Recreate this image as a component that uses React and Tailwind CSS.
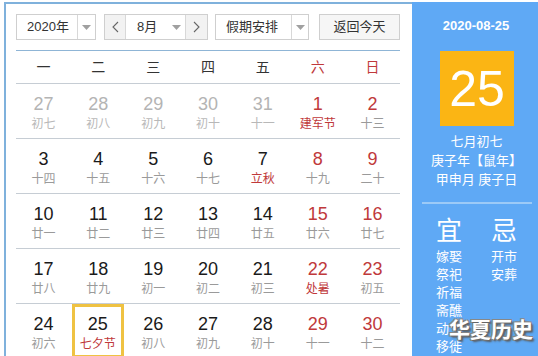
import React from "react";

const FONT = { fontFamily: '"Liberation Sans", "Noto Sans CJK SC", sans-serif' };

const rows = [
  [
    { n: "27", l: "初七", dim: true },
    { n: "28", l: "初八", dim: true },
    { n: "29", l: "初九", dim: true },
    { n: "30", l: "初十", dim: true },
    { n: "31", l: "十一", dim: true },
    { n: "1", l: "建军节", red: true, fest: true },
    { n: "2", l: "十三", red: true },
  ],
  [
    { n: "3", l: "十四" },
    { n: "4", l: "十五" },
    { n: "5", l: "十六" },
    { n: "6", l: "十七" },
    { n: "7", l: "立秋", fest: true },
    { n: "8", l: "十九", red: true },
    { n: "9", l: "二十", red: true },
  ],
  [
    { n: "10", l: "廿一" },
    { n: "11", l: "廿二" },
    { n: "12", l: "廿三" },
    { n: "13", l: "廿四" },
    { n: "14", l: "廿五" },
    { n: "15", l: "廿六", red: true },
    { n: "16", l: "廿七", red: true },
  ],
  [
    { n: "17", l: "廿八" },
    { n: "18", l: "廿九" },
    { n: "19", l: "初一" },
    { n: "20", l: "初二" },
    { n: "21", l: "初三" },
    { n: "22", l: "处暑", red: true, fest: true },
    { n: "23", l: "初五", red: true },
  ],
  [
    { n: "24", l: "初六" },
    { n: "25", l: "七夕节", fest: true, sel: true },
    { n: "26", l: "初八" },
    { n: "27", l: "初九" },
    { n: "28", l: "初十" },
    { n: "29", l: "十一", red: true },
    { n: "30", l: "十二", red: true },
  ],
];

function Arrow() {
  return (
    <svg width="9" height="5" viewBox="0 0 9 5">
      <polygon points="0,0 9,0 4.5,5" fill="#a0a0a0" />
    </svg>
  );
}

function Chevron({ dir }) {
  return (
    <svg width="7" height="12" viewBox="0 0 7 12">
      <polyline
        points={dir === "left" ? "6,1 1,6 6,11" : "1,1 6,6 1,11"}
        fill="none"
        stroke="#666"
        strokeWidth="1.1"
      />
    </svg>
  );
}

function Cell({ d }) {
  const numColor = d.dim ? "text-[#b4b4b4]" : d.red ? "text-[#c0393b]" : "text-[#1a1a1a]";
  const lunColor = d.fest ? "text-[#c0393b]" : d.dim ? "text-[#b8b8b8]" : "text-[#9a9a9a]";
  const inner = (
    <>
      <div className={`text-[18px] leading-[20px] ${numColor}`}>{d.n}</div>
      <div className={`text-[12px] leading-[16px] mt-[2px] ${lunColor}`}>{d.l}</div>
    </>
  );
  if (d.sel) {
    return (
      <div className="flex-1 h-full">
        <div className="ml-[1px] mr-[2px] h-full border-[3px] border-[#efc242] flex flex-col items-center pt-[7px]">
          {inner}
        </div>
      </div>
    );
  }
  return <div className="flex-1 h-full flex flex-col items-center pt-[10px]">{inner}</div>;
}

export default function App() {
  return (
    <div className="w-[538px] h-[356px] overflow-hidden bg-white flex pl-[4px] pt-[2px] relative" style={FONT}>
      {/* left calendar */}
      <div className="w-[408px] shrink-0 border-l-[2px] border-t-[2px] border-[#7fb1dc] pl-[10px] pt-[10px] pr-[12px]">
        {/* controls */}
        <div className="flex h-[26px] text-[13px] text-[#333]">
          <div className="w-[80px] h-full border border-[#cfcfcf] flex">
            <div className="flex-1 flex items-center pl-[10px]">2020年</div>
            <div className="w-[18px] border-l border-[#d8d8d8] flex items-center justify-center">
              <Arrow />
            </div>
          </div>
          <div className="ml-[8px] w-[104px] h-full border border-[#cfcfcf] flex">
            <div className="w-[21px] bg-[#f2f2f2] border-r border-[#d8d8d8] flex items-center justify-center">
              <Chevron dir="left" />
            </div>
            <div className="flex-1 flex items-center pl-[11px]">8月</div>
            <div className="w-[18px] flex items-center justify-center">
              <Arrow />
            </div>
            <div className="w-[22px] bg-[#f2f2f2] border-l border-[#d8d8d8] flex items-center justify-center">
              <Chevron dir="right" />
            </div>
          </div>
          <div className="ml-[7px] w-[94px] h-full border border-[#cfcfcf] flex">
            <div className="flex-1 flex items-center pl-[10px]">假期安排</div>
            <div className="w-[17px] border-l border-[#d8d8d8] flex items-center justify-center">
              <Arrow />
            </div>
          </div>
          <div className="ml-[10px] flex-1 h-full border border-[#cfcfcf] bg-[#f6f6f6] flex items-center justify-center">
            返回今天
          </div>
        </div>
        {/* weekday header */}
        <div className="mt-[10px] border-t border-[#8fb5d6] border-b border-b-[#c6cdd4] h-[34px] flex items-center text-[14px] text-[#333]">
          {["一", "二", "三", "四", "五", "六", "日"].map((w, i) => (
            <div key={w} className={`flex-1 text-center ${i >= 5 ? "text-[#c0393b]" : ""}`}>
              {w}
            </div>
          ))}
        </div>
        {rows.map((r, i) => (
          <div key={i} className="h-[55px] border-b border-[#c6cdd4] flex">
            {r.map((d, j) => (
              <Cell key={j} d={d} />
            ))}
          </div>
        ))}
      </div>

      {/* right panel */}
      <div className="flex-1 bg-[#5fa9f5] flex flex-col text-white">
        <div className="text-center text-[13px] font-bold leading-[16px] mt-[16px] pl-[2px]">2020-08-25</div>
        <div className="mt-[17px] ml-[28px] w-[74px] h-[75px] bg-[#fbb514] flex items-center justify-center text-[50px] leading-none">
          25
        </div>
        <div className="mt-[6px] text-center text-[13px] leading-[19px] pl-[3px]">
          <div>七月初七</div>
          <div>庚子年【鼠年】</div>
          <div>甲申月 庚子日</div>
        </div>
        <div className="mt-[13px] ml-[10px] mr-[6px] h-[2px] bg-[#9ccaf7]" />
        <div className="flex mt-[12px] pl-[24px]">
          <div className="w-[55px]">
            <div className="text-[26px] leading-[30px]">宜</div>
            <div className="text-[13px] leading-[18px] mt-[2px]">
              <div>嫁娶</div>
              <div>祭祀</div>
              <div>祈福</div>
              <div>斋醮</div>
              <div>动土</div>
              <div>移徙</div>
            </div>
          </div>
          <div>
            <div className="text-[26px] leading-[30px]">忌</div>
            <div className="text-[13px] leading-[18px] mt-[2px]">
              <div>开市</div>
              <div>安葬</div>
            </div>
          </div>
        </div>
      </div>

      {/* watermark */}
      <div
        className="absolute left-[449px] top-[316px] text-[21px] font-bold text-white leading-[28px]"
        style={{ textShadow: "1px 1px 0 #666, -1px -1px 0 #888, 1px -1px 0 #888, -1px 1px 0 #888, 2px 2px 2px #555" }}
      >
        华夏历史
      </div>
    </div>
  );
}
